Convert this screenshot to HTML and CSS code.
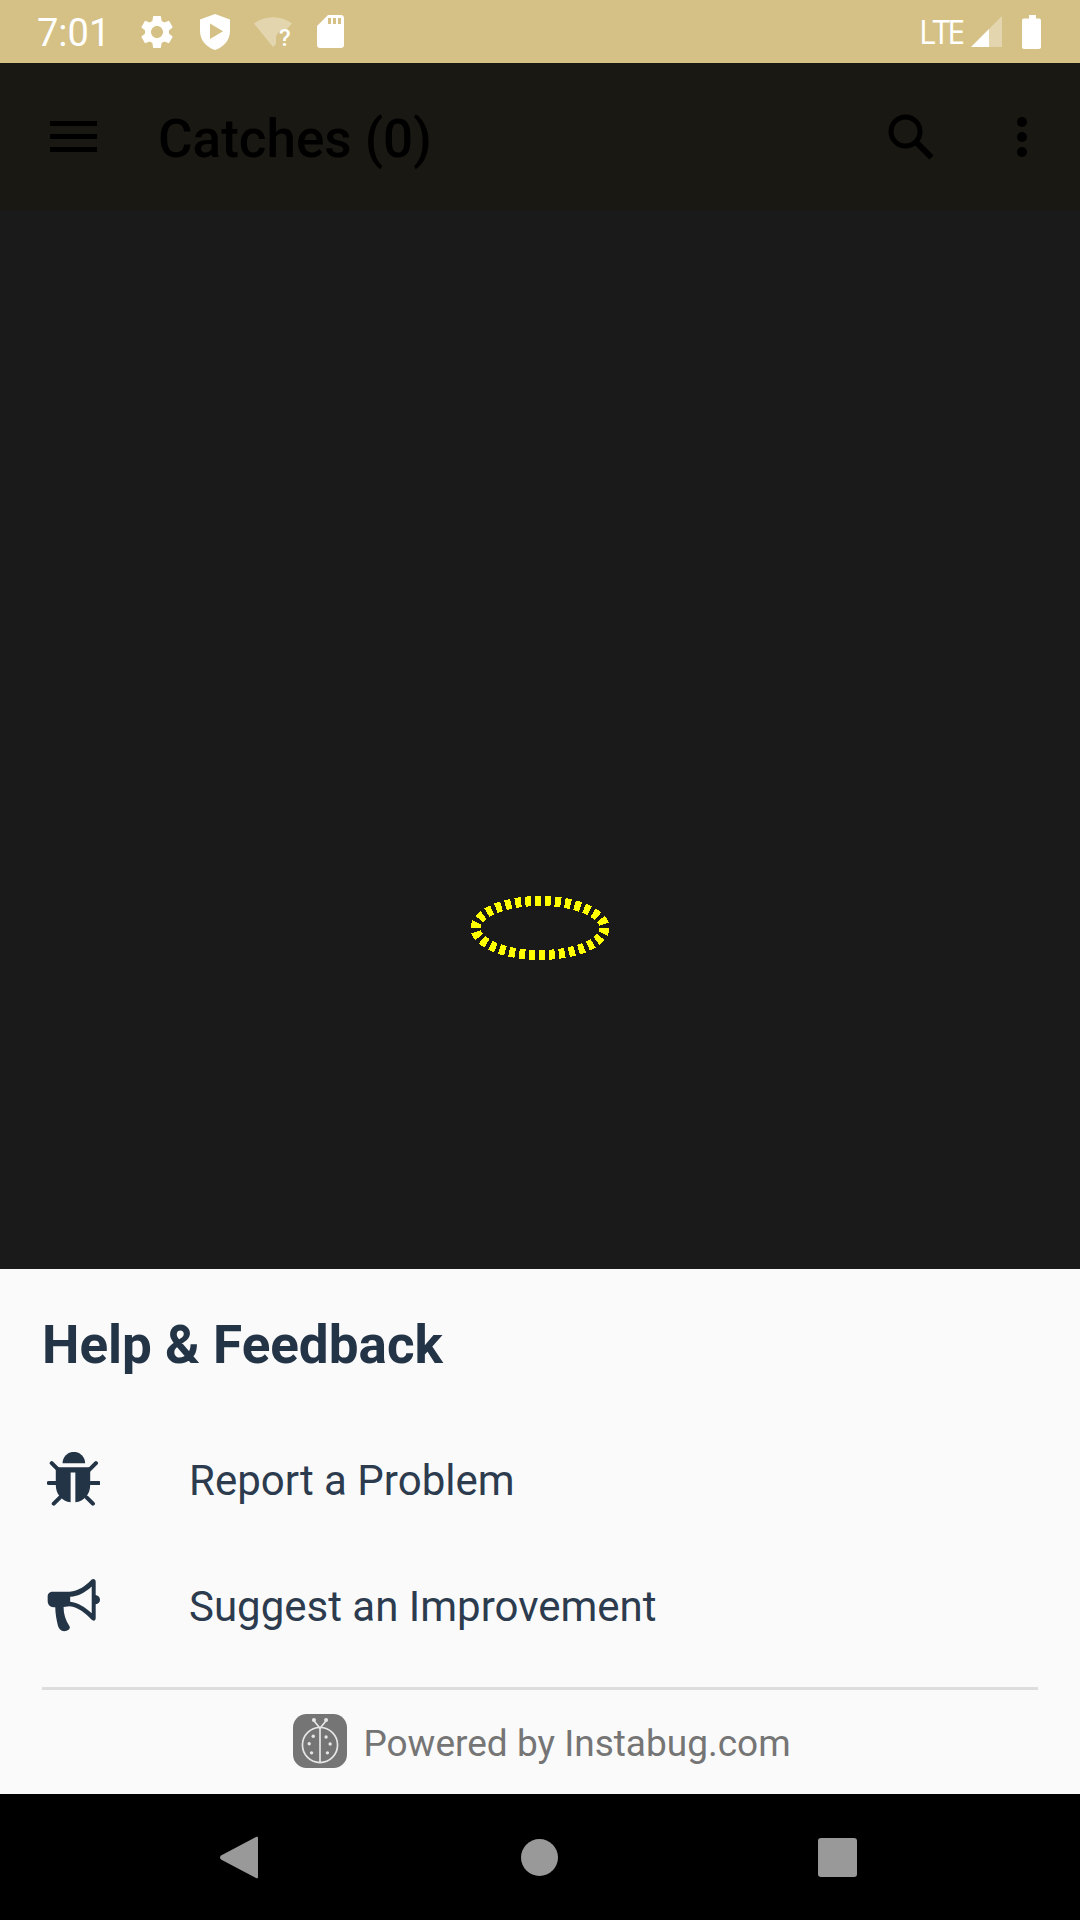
FILE: index.html
```html
<!DOCTYPE html>
<html lang="en">
<head>
    <meta charset="UTF-8">
    <title>Catches</title>
    <link rel="stylesheet" href="styles.css">
</head>
<body>
    <div class="screen">
        <div class="status-bar">
            <span class="clock">7:01</span>
            <svg class="icon-gear" viewBox="0 0 24 24"><path d="M19.14 12.94c.04-.3.06-.61.06-.94 0-.32-.02-.64-.07-.94l2.03-1.58c.18-.14.23-.41.12-.61l-1.92-3.32c-.12-.22-.37-.29-.59-.22l-2.39.96c-.5-.38-1.03-.7-1.62-.94l-.36-2.54c-.04-.24-.24-.41-.48-.41h-3.84c-.24 0-.43.17-.47.41l-.36 2.54c-.59.24-1.13.57-1.62.94l-2.39-.96c-.22-.08-.47 0-.59.22L2.74 8.87c-.12.21-.08.47.12.61l2.03 1.58c-.05.3-.09.63-.09.94s.02.64.07.94l-2.03 1.58c-.18.14-.23.41-.12.61l1.92 3.32c.12.22.37.29.59.22l2.39-.96c.5.38 1.03.7 1.62.94l.36 2.54c.05.24.24.41.48.41h3.84c.24 0 .44-.17.47-.41l.36-2.54c.59-.24 1.13-.56 1.62-.94l2.39.96c.22.08.47 0 .59-.22l1.92-3.32c.12-.22.07-.47-.12-.61l-2.01-1.58zM12 15.6c-1.98 0-3.6-1.62-3.6-3.6s1.62-3.6 3.6-3.6 3.6 1.62 3.6 3.6-1.62 3.6-3.6 3.6z"/></svg>
            <svg class="icon-shield" viewBox="0 0 30 36"><path fill-rule="evenodd" d="M15 0 L30 5.500 V17 C30 26 24 33 15 36 C6 33 0 26 0 17 V5.500 Z M10 9.500 V25 L23 17.200 Z"/></svg>
            <svg class="icon-wifi" viewBox="0 0 38 38"><path class="faded" d="M0 6.500 C11 -2 27 -2 38 6.500 L32 13 C27 13 23 15 22 20 V27 L19 30 Z"/><text class="wifi-mark" x="25" y="29">?</text></svg>
            <svg class="icon-sd" viewBox="0 0 27 33"><path fill-rule="evenodd" d="M11 0 H24 C25.700 0 27 1.300 27 3 V30 C27 31.700 25.700 33 24 33 H3 C1.300 33 0 31.700 0 30 V11 Z M11 3 V9 H14 V3 Z M16 3 V9 H19 V3 Z M21 3 V9 H24 V3 Z"/></svg>
            <span class="status-spacer"></span>
            <span class="network">LTE</span>
            <svg class="icon-signal" viewBox="0 0 31 31"><path class="faded" d="M31 0 V31 H18 V13 Z"/><path d="M18 13 V31 H0 Z"/></svg>
            <svg class="icon-battery" viewBox="0 0 19 34"><path d="M7 0 H14 V3.500 H17 C18.200 3.500 19 4.300 19 5.500 V32 C19 33.200 18.200 34 17 34 H2 C.800 34 0 33.200 0 32 V5.500 C0 4.300 .800 3.500 2 3.500 H7 Z"/></svg>
        </div>

        <div class="toolbar">
            <div class="hamburger"><span></span><span></span><span></span></div>
            <h1 class="toolbar-title">Catches (0)</h1>
            <svg class="icon-search" viewBox="0 0 46 46"><circle cx="17.500" cy="17.500" r="14.500" fill="none" stroke="#000" stroke-width="5"/><path d="M28 28 L43.500 43.500" stroke="#000" stroke-width="6"/></svg>
            <div class="overflow"><span></span><span></span><span></span></div>
        </div>

        <div class="backdrop">
            <svg class="spinner" viewBox="0 0 140 64"><ellipse cx="70" cy="32" rx="64.500" ry="27" pathLength="60" fill="none" stroke="#ffff00" stroke-width="10" stroke-dasharray="1.200 .800"/></svg>
        </div>

        <div class="sheet">
            <h2 class="sheet-title">Help &amp; Feedback</h2>
            <div class="sheet-row">
                <svg class="row-icon" viewBox="52 35 157 160">
                    <path d="M98 68 a33.500 33.500 0 0 1 67 0 z"/>
                    <path d="M78 80 H180 V133 C180 160 162 182 136 184 V96 H122 V184 C96 182 78 160 78 133 Z"/>
                    <path class="legs" d="M66 68 L86 88 M197 68 L177 88 M57 127 H80 M206 127 H182 M72 188 L90 170 M188 188 L170 170"/>
                </svg>
                <span class="row-label">Report a Problem</span>
            </div>
            <div class="sheet-row">
                <svg class="row-icon" viewBox="50 38 160 160">
                    <path fill-rule="evenodd" d="M68 78 H118 C145 76 165 62 184 42 C190 37 197 40 197 48 V88 C206 90 210 96 210 102 C210 110 205 114 197 116 V158 C197 165 190 168 184 162 C165 142 145 125 118 122 L100 124 C100 145 106 165 118 182 C122 190 112 197 102 197 C92 197 84 188 82 176 C78 160 75 142 75 125 C60 125 52 118 52 105 V92 C52 84 58 78 68 78 Z M120 93 V108 C142 110 165 124 185 143 V62 C165 80 145 92 120 93 Z"/>
                </svg>
                <span class="row-label">Suggest an Improvement</span>
            </div>
            <div class="sheet-footer">
                <svg class="instabug-logo" viewBox="40 42 160 160">
                    <rect x="40" y="42" width="160" height="160" rx="40" fill="#757575"/>
                    <circle cx="120" cy="134" r="52" fill="none" stroke="#e6e6e6" stroke-width="5"/>
                    <path d="M120 82 V186" stroke="#e6e6e6" stroke-width="5"/>
                    <path d="M120 84 L102 62 M120 84 L138 62" stroke="#e6e6e6" stroke-width="5"/>
                    <g fill="#e6e6e6">
                        <circle cx="102" cy="60" r="6"/><circle cx="138" cy="60" r="6"/>
                        <circle cx="100" cy="108" r="5"/><circle cx="88" cy="130" r="5"/><circle cx="95" cy="157" r="5"/>
                        <circle cx="138" cy="110" r="5"/><circle cx="150" cy="131" r="5"/><circle cx="142" cy="157" r="5"/>
                    </g>
                </svg>
                <span class="footer-text">Powered by Instabug.com</span>
            </div>
        </div>

        <div class="nav-bar">
            <svg class="nav-back" viewBox="0 0 38 43"><path d="M36 1 C37.200 .200 38 .800 38 2 V41 C38 42.200 37.200 42.800 36 42 L1 23.500 C-.300 22.500 -.300 20.500 1 19.500 Z"/></svg>
            <span class="nav-home"></span>
            <span class="nav-recent"></span>
        </div>
    </div>
</body>
</html>
```

FILE: styles.css
```css
* {
    box-sizing: border-box;
}
body {
    margin: 0;
    font-family: Roboto, sans-serif;
    background-color: #000;
}
svg {
    display: block;
    flex-shrink: 0;
}
.screen {
    width: 1080px;
    height: 1920px;
    display: flex;
    flex-direction: column;
    overflow: hidden;
}

/* status bar */
.status-bar {
    height: 63px;
    background-color: #d5c185;
    color: #fff;
    fill: #fff;
    display: flex;
    align-items: center;
    padding: 0 39px 0 37px;
}
.status-bar .faded {
    opacity: 0.35;
}
.clock {
    font-size: 38px;
    width: 102px;
    line-height: 66px;
    padding-top: 3px;
}
.icon-gear {
    width: 40px;
    height: 40px;
    margin-right: 23px;
    margin-left: -2px;
}
.icon-shield {
    width: 30px;
    height: 36px;
    margin-right: 24px;
}
.icon-wifi {
    width: 38px;
    height: 38px;
    margin-right: 25px;
    margin-top: 8px;
}
.wifi-mark {
    font-family: Roboto, sans-serif;
    font-size: 24px;
    font-weight: 500;
}
.icon-sd {
    width: 27px;
    height: 33px;
}
.status-spacer {
    flex: 1;
}
.network {
    font-family: "Open Sans", sans-serif;
    font-size: 32px;
    letter-spacing: -3px;
    margin-right: 9px;
}
.icon-signal {
    width: 31px;
    height: 31px;
    margin-right: 20px;
}
.icon-battery {
    width: 19px;
    height: 34px;
}

/* toolbar, dimmed */
.toolbar {
    height: 147px;
    background-color: #1a1812;
    display: flex;
    align-items: center;
    color: #000;
    padding: 0 53px 0 50px;
}
.hamburger {
    width: 47px;
    display: flex;
    flex-direction: column;
    gap: 8px;
    margin-right: 61px;
}
.hamburger span {
    height: 5px;
    background-color: #000;
}
.toolbar-title {
    flex: 1;
    margin: 0;
    padding-top: 5px;
    font-size: 53px;
    font-weight: 500;
}
.icon-search {
    width: 46px;
    height: 46px;
    margin-right: 83px;
}
.overflow {
    display: flex;
    flex-direction: column;
    gap: 5px;
}
.overflow span {
    width: 10px;
    height: 10px;
    border-radius: 50%;
    background-color: #000;
}

.backdrop {
    flex: 1;
    background-color: #1a1a1a;
    display: flex;
    justify-content: center;
    padding-top: 686px;
}
.spinner {
    width: 140px;
    height: 64px;
    shape-rendering: crispEdges;
}

/* bottom sheet */
.sheet {
    height: 525px;
    background-color: #fafafa;
    color: #243447;
    padding: 0 42px;
    display: flex;
    flex-direction: column;
}
.sheet-title {
    margin: 0;
    font-size: 53px;
    font-weight: 700;
    line-height: 60px;
    padding-top: 46px;
    height: 149px;
}
.sheet-row {
    height: 126px;
    display: flex;
    align-items: center;
}
.row-icon {
    width: 53px;
    height: 54px;
    margin-left: 5px;
    margin-right: 89px;
    margin-bottom: 5px;
    fill: #243447;
}
.legs {
    fill: none;
    stroke: #243447;
    stroke-width: 12;
    stroke-linecap: round;
}
.row-label {
    font-size: 42px;
    color: #2c3c4e;
    padding-bottom: 2px;
}
.sheet-footer {
    margin-top: 17px;
    border-top: 3px solid #ddd;
    flex: 1;
    display: flex;
    align-items: center;
    justify-content: center;
    gap: 16px;
    padding-left: 4px;
}
.instabug-logo {
    width: 54px;
    height: 54px;
    margin-top: -2px;
}
.footer-text {
    font-size: 37px;
    color: #757575;
    padding-top: 2px;
}

/* system nav */
.nav-bar {
    height: 126px;
    background-color: #000;
    display: flex;
    align-items: center;
    padding: 0 223px 0 220px;
    justify-content: space-between;
}
.nav-back {
    width: 38px;
    height: 43px;
    fill: #999;
}
.nav-home {
    width: 37px;
    height: 37px;
    margin-left: 3px;
    border-radius: 50%;
    background-color: #999;
}
.nav-recent {
    width: 39px;
    height: 39px;
    border-radius: 3px;
    background-color: #999;
}
```
